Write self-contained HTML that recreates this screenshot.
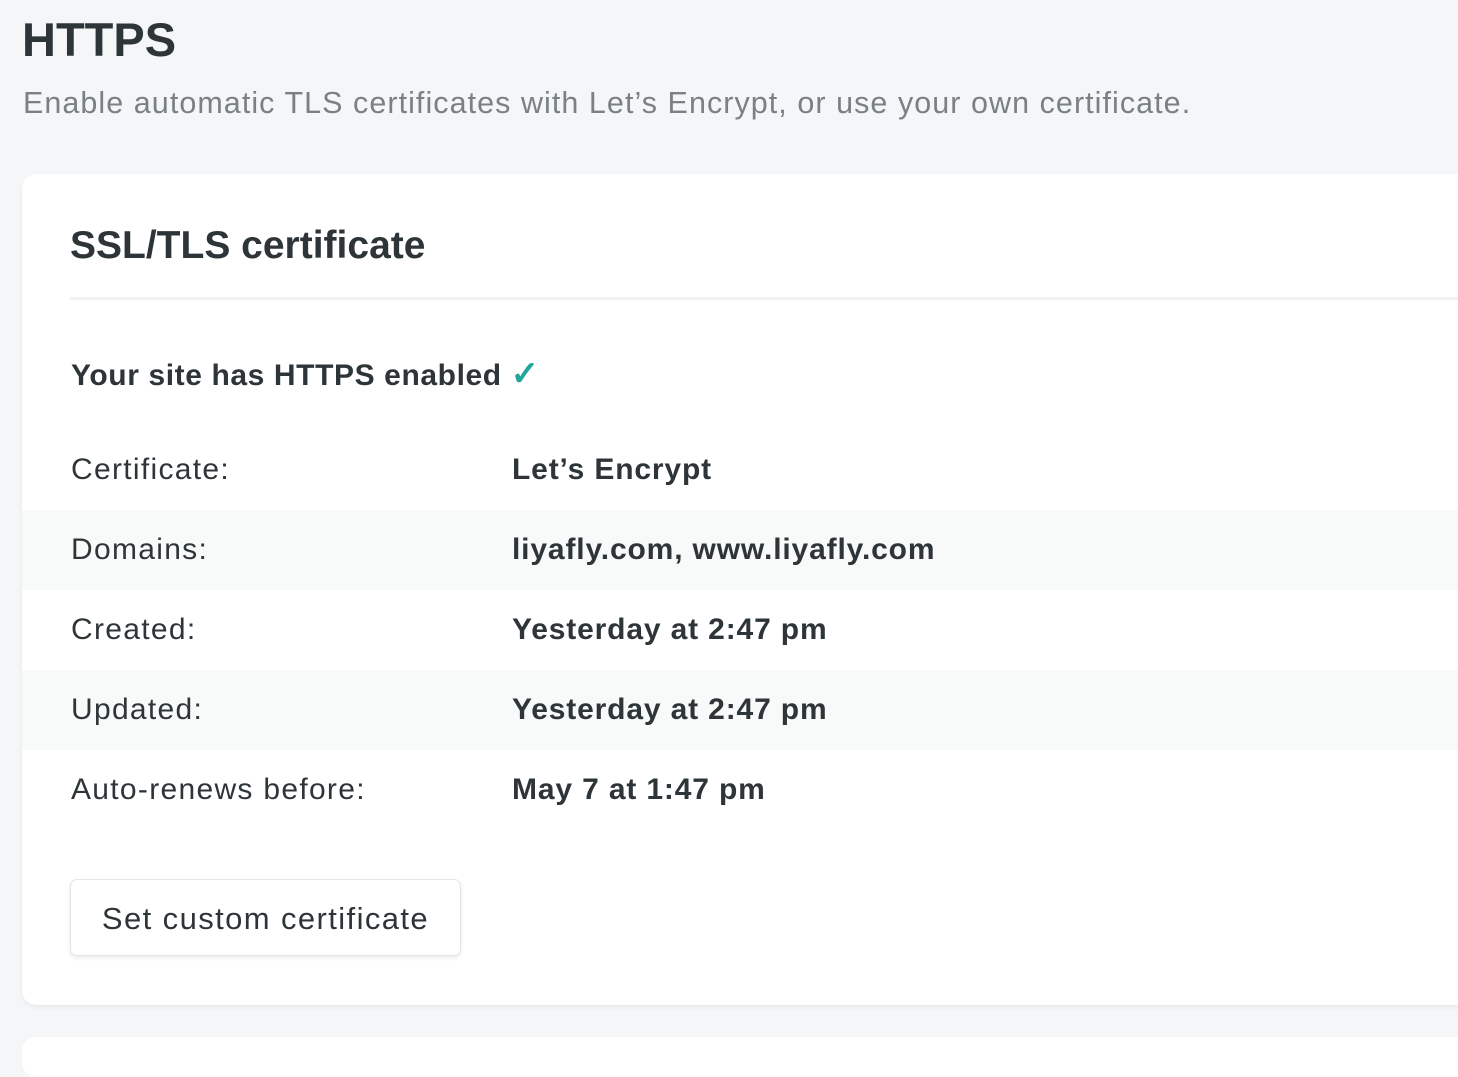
<!DOCTYPE html>
<html><head><style>
body{margin:0;width:1458px;height:1042px;overflow:hidden;background:#f4f6f7;font-family:"Liberation Sans",Arial,sans-serif;color:#2e3539;position:relative}
.h1{position:absolute;left:22px;top:12px;font-size:47px;font-weight:bold;margin:0;line-height:56px}
.sub{position:absolute;left:23px;top:84px;font-size:30.5px;letter-spacing:1.05px;color:#7a8185;line-height:38px;white-space:nowrap}
.card{position:absolute;left:22px;top:174px;width:1460px;height:831px;background:#fff;border-radius:14px;box-shadow:0 2px 4px rgba(0,0,0,.06)}
.card2{position:absolute;left:22px;top:1037px;width:1460px;height:40px;background:#fff;border-radius:14px}
.title{position:absolute;left:48px;top:48px;font-size:39px;font-weight:bold;line-height:48px;white-space:nowrap}
.div{position:absolute;left:48px;top:123px;right:0;height:3px;background:#eff1f2}
.ok{position:absolute;left:49px;top:180px;font-size:30px;letter-spacing:0.6px;font-weight:bold;line-height:40px;white-space:nowrap}
.ok span{color:#20a69a;font-size:34px}
.row{position:absolute;left:0;right:0;height:80px;line-height:80px;font-size:30px;white-space:nowrap}
.row.s{background:#f8f9f9}
.row .l{position:absolute;left:49px;letter-spacing:1.3px}
.row .v{position:absolute;left:490px;font-weight:bold;letter-spacing:0.85px}
.btn{position:absolute;left:48px;top:705px;width:391px;height:77px;border:1px solid #e3e6e7;border-radius:7px;box-shadow:0 2px 4px rgba(0,0,0,.08);font-size:31px;letter-spacing:1.4px;line-height:77px;text-align:center;box-sizing:border-box}
</style></head><body>
<div class="h1">HTTPS</div>
<div class="sub">Enable automatic TLS certificates with Let’s Encrypt, or use your own certificate.</div>
<div class="card">
<div class="title">SSL/TLS certificate</div>
<div class="div"></div>
<div class="ok">Your site has HTTPS enabled <span>✓</span></div>
<div class="row" style="top:256px"><span class="l">Certificate:</span><span class="v">Let’s Encrypt</span></div>
<div class="row s" style="top:336px"><span class="l">Domains:</span><span class="v">liyafly.com, www.liyafly.com</span></div>
<div class="row" style="top:416px"><span class="l">Created:</span><span class="v">Yesterday at 2:47 pm</span></div>
<div class="row s" style="top:496px"><span class="l">Updated:</span><span class="v">Yesterday at 2:47 pm</span></div>
<div class="row" style="top:576px"><span class="l">Auto-renews before:</span><span class="v">May 7 at 1:47 pm</span></div>
<div class="btn">Set custom certificate</div>
</div>
<div class="card2"></div>
</body></html>
